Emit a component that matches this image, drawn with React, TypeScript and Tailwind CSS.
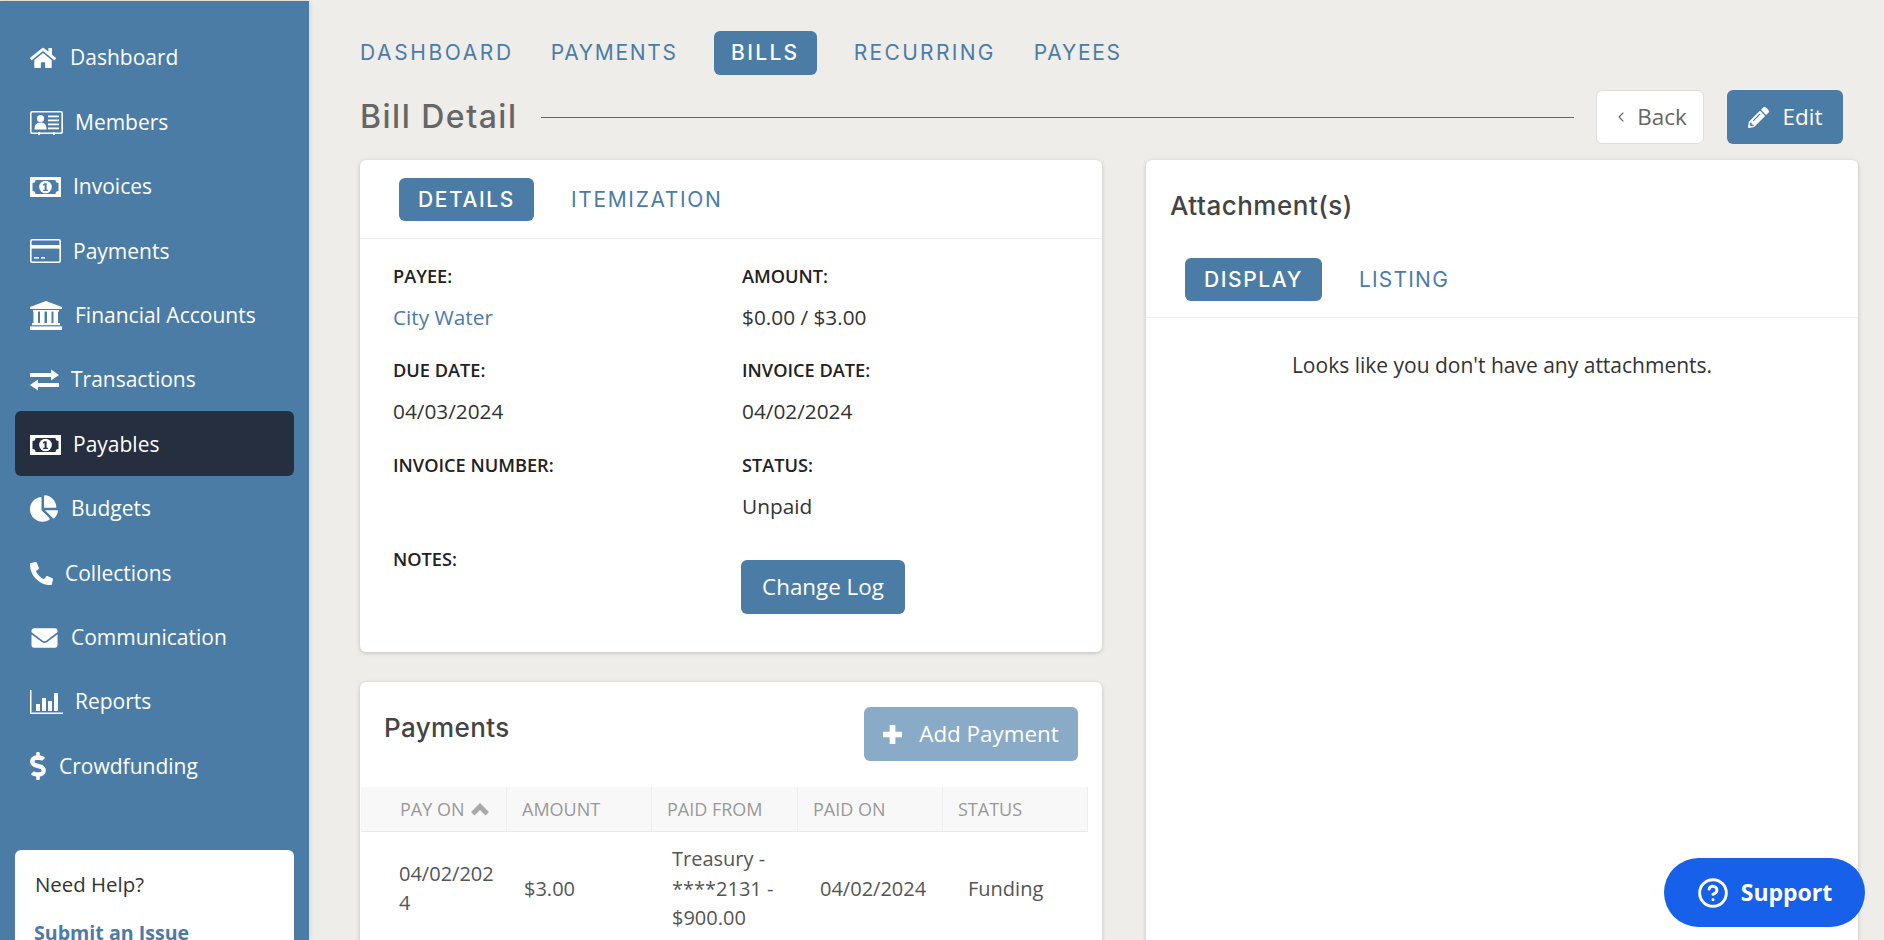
import { FaHome, FaChartPie, FaPhoneAlt, FaEnvelope, FaDollarSign, FaPencilAlt } from "react-icons/fa";
import { ChevronLeft, CircleHelp } from "lucide-react";

const MoneyIcon = ({ dark = false }: { dark?: boolean }) => {
  const cut = dark ? "#262f40" : "#4b7ca6";
  return (
    <svg viewBox="0 0 31 20" className="w-[31px] h-[20px] shrink-0">
      <rect width="31" height="20" fill="#fff" />
      <path d="M5.5 3H25.5C25.5 5 26.5 6 28.5 6V14C26.5 14 25.5 15 25.5 17H5.5C5.5 15 4.5 14 2.5 14V6C4.5 6 5.5 5 5.5 3Z" fill={cut} />
      <circle cx="15.5" cy="10" r="6.3" fill="#fff" />
      <path d="M14.2 6.2H16.6V12.8H17.9V14H13.2V12.8H14.6V8L13.4 8.7L12.9 7.7Z" fill={cut} />
    </svg>
  );
};

const MembersIcon = () => (
  <svg viewBox="0 0 33 24" className="w-[33px] h-[24px] shrink-0" fill="#fff">
    <rect x="0.8" y="0.8" width="31.4" height="21.4" rx="1.5" fill="none" stroke="#fff" strokeWidth="1.6" />
    <circle cx="10.5" cy="7.5" r="3.6" />
    <path d="M4.5 18.5C4.5 13.5 6.5 11.5 10.5 11.5C14.5 11.5 16.5 13.5 16.5 18.5Z" />
    <rect x="18" y="4.5" width="11" height="1.8" />
    <rect x="18" y="8.5" width="11" height="1.8" />
    <rect x="18" y="12.5" width="11" height="1.8" />
    <rect x="18" y="16.5" width="11" height="1.8" />
    <rect x="8" y="21" width="2" height="3" />
    <rect x="23" y="21" width="2" height="3" />
  </svg>
);

const CardIcon = () => (
  <svg viewBox="0 0 31 24" className="w-[31px] h-[24px] shrink-0" fill="#fff">
    <rect x="0.8" y="0.8" width="29.4" height="22.4" rx="1.5" fill="none" stroke="#fff" strokeWidth="1.6" />
    <rect x="1" y="6" width="29" height="3.6" />
    <rect x="4" y="18" width="5" height="1.6" />
    <rect x="11" y="18" width="4" height="1.6" />
  </svg>
);

const BankIcon = () => (
  <svg viewBox="0 0 32 29" className="w-[32px] h-[29px] shrink-0" fill="#fff">
    <path d="M16 0L32 6V8H0V6Z" />
    <rect x="3" y="9" width="26" height="1.6" />
    <rect x="3.5" y="10" width="4.5" height="12" />
    <rect x="10" y="10" width="4.5" height="12" />
    <rect x="17" y="10" width="4.5" height="12" />
    <rect x="23.5" y="10" width="4.5" height="12" />
    <rect x="2" y="22" width="28" height="2.2" />
    <rect x="0" y="25.4" width="32" height="3.6" />
  </svg>
);

const ExchangeIcon = () => (
  <svg viewBox="0 0 29 22" className="w-[29px] h-[22px] shrink-0" fill="#fff">
    <path d="M0 4H21V0.5L29 6L21 11.5V8H0Z" />
    <path d="M29 14H8V10.5L0 16L8 21.5V18H29Z" />
  </svg>
);

const ChartIcon = () => (
  <svg viewBox="0 0 33 24" className="w-[33px] h-[24px] shrink-0" fill="#fff">
    <path d="M0 0H1.5V22.5H33V24H0Z" />
    <rect x="6" y="14" width="4" height="7" />
    <rect x="12" y="8" width="4" height="13" />
    <rect x="18" y="11" width="4" height="10" />
    <rect x="24" y="3" width="4" height="18" />
  </svg>
);

const navItems = [
  { label: "Dashboard", icon: <FaHome className="w-[26px] h-[26px] shrink-0" />, gap: "gap-[14px]" },
  { label: "Members", icon: <MembersIcon />, gap: "gap-[12px]" },
  { label: "Invoices", icon: <MoneyIcon />, gap: "gap-[12px]" },
  { label: "Payments", icon: <CardIcon />, gap: "gap-[12px]" },
  { label: "Financial Accounts", icon: <BankIcon />, gap: "gap-[13px]" },
  { label: "Transactions", icon: <ExchangeIcon />, gap: "gap-[12px]" },
  { label: "Payables", icon: <MoneyIcon dark />, gap: "gap-[12px]", active: true },
  { label: "Budgets", icon: <FaChartPie className="w-[28px] h-[27px] shrink-0" />, gap: "gap-[13px]" },
  { label: "Collections", icon: <FaPhoneAlt className="w-[23px] h-[23px] shrink-0" />, gap: "gap-[12px]" },
  { label: "Communication", icon: <FaEnvelope className="w-[29px] h-[26px] shrink-0" />, gap: "gap-[12px]" },
  { label: "Reports", icon: <ChartIcon />, gap: "gap-[12px]" },
  { label: "Crowdfunding", icon: <FaDollarSign className="w-[16px] h-[28px] shrink-0" />, gap: "gap-[13px]" },
];

const Sidebar = () => (
  <aside className="w-[309px] shrink-0 h-[940px] mt-px bg-[#4b7ca6] pt-[24px] shadow-[0_0_6px_rgba(0,0,0,0.15)] text-white">
    <nav>
      {navItems.map((item) => (
        <div
          key={item.label}
          className={`mx-[15px] h-[64.4px] px-[15px] pt-[2px] flex items-center rounded-md text-[21px] ${item.gap} ${item.active ? "bg-[#262f40]" : ""}`}
        >
          {item.icon}
          <span>{item.label}</span>
        </div>
      ))}
    </nav>
    <div className="mx-[15px] pt-[52px]">
      <div className="bg-white rounded-md px-[20px] pt-[17px] h-[200px]">
        <p className="text-[#333] text-[20.4px] leading-[34px]">Need Help?</p>
        <p className="text-[#4b7ca6] text-[19.6px] font-bold leading-[34px] mt-[15px] -ml-px">Submit an Issue</p>
      </div>
    </div>
  </aside>
);

const tabFont = "font-['Inter',sans-serif] uppercase text-[21px]";

const TopTabs = () => (
  <div className="flex items-center h-[44px]">
    <span className={`${tabFont} tracking-[2.6px] text-[#4b7ca6] mr-[37px]`}>Dashboard</span>
    <span className={`${tabFont} tracking-[1.7px] text-[#4b7ca6] mr-[36px]`}>Payments</span>
    <span className={`${tabFont} tracking-[2.3px] font-medium text-white bg-[#4b7ca6] rounded-md h-[44px] w-[103px] flex items-center justify-center mr-[37px]`}>Bills</span>
    <span className={`${tabFont} tracking-[2.3px] text-[#4b7ca6] mr-[38px]`}>Recurring</span>
    <span className={`${tabFont} tracking-[1.7px] text-[#4b7ca6]`}>Payees</span>
  </div>
);

const Field = ({ label, value, link }: { label: string; value?: string; link?: boolean }) => (
  <div className="h-[94px]">
    <div className="text-[18.2px] font-semibold leading-[30px] text-[#222] uppercase">{label}</div>
    {value && <div className={`mt-[11px] leading-[30px] text-[20.8px] ${link ? "text-[#4b7ca6]" : "text-[#333]"}`}>{value}</div>}
  </div>
);

const DetailsCard = () => (
  <section className="bg-white rounded-md h-[492px] shadow-[0_1px_4px_rgba(0,0,0,0.2)]">
    <div className="h-[79px] border-b border-[#eeeeee] pt-[18px]">
      <div className="flex items-center pl-[39px]">
        <span className={`${tabFont} tracking-[1.6px] font-medium text-white bg-[#4b7ca6] rounded-md h-[43px] px-[19px] flex items-center`}>Details</span>
        <span className={`${tabFont} tracking-[1.65px] text-[#4b7ca6] ml-[37px]`}>Itemization</span>
      </div>
    </div>
    <div className="grid grid-cols-[349px_1fr] pl-[33px] pt-[22px]">
      <Field label="Payee:" value="City Water" link />
      <Field label="Amount:" value="$0.00 / $3.00" />
      <Field label="Due Date:" value="04/03/2024" />
      <Field label="Invoice Date:" value="04/02/2024" />
      <div className="pt-px"><Field label="Invoice Number:" /></div>
      <div className="pt-px"><Field label="Status:" value="Unpaid" /></div>
      <Field label="Notes:" />
      <div className="pt-[16px]">
        <button className="h-[54px] w-[164px] bg-[#4b7ca6] text-white rounded-md text-[22.4px] -ml-px">Change Log</button>
      </div>
    </div>
  </section>
);

const headers = ["Amount", "Paid From", "Paid On", "Status"];

const PaymentsCard = () => (
  <section className="bg-white rounded-md mt-[30px] h-[400px] shadow-[0_1px_4px_rgba(0,0,0,0.2)]">
    <div className="flex justify-between h-[105px] pl-[24px] pr-[24px] pt-[25px]">
      <h2 className="font-['Inter',sans-serif] font-medium text-[26px] tracking-[0.4px] text-[#444] leading-[42px]">Payments</h2>
      <button className="h-[54px] w-[214px] bg-[#8aabc7] text-white rounded-md text-[22.4px] flex items-center justify-center gap-[17px]">
        <svg viewBox="0 0 20 20" className="w-[19px] h-[19px]" fill="#fff"><path d="M7 0H13V7H20V13H13V20H7V13H0V7H7Z" /></svg>
        Add Payment
      </button>
    </div>
    <div className="ml-px w-[727px] grid grid-cols-[146px_145px_146px_145px_145px] h-[45px] bg-[#f8f8f8] border-b border-[#e8e8e8] text-[18px] text-[#999] uppercase leading-[44px]">
      <div className="pl-[39px] border-r border-[#eeeeee] flex items-center gap-[6px]">
        Pay On
        <svg viewBox="0 0 18 13" className="w-[18px] h-[13px]" fill="#aaa"><path d="M9 0L18 9L14.5 12.5L9 7L3.5 12.5L0 9Z" /></svg>
      </div>
      {headers.map((h) => (
        <div key={h} className="pl-[15px] border-r border-[#eeeeee]">{h}</div>
      ))}
    </div>
    <div className="ml-px w-[727px] grid grid-cols-[146px_145px_146px_145px_145px] items-center text-[20px] text-[#555] leading-[29.5px] pt-[12px]">
      <div className="pl-[38px] pr-[10px] break-all">04/02/2024</div>
      <div className="pl-[17px]">$3.00</div>
      <div className="pl-[20px] pr-[20px]">Treasury - ****2131 - $900.00</div>
      <div className="pl-[22px]">04/02/2024</div>
      <div className="pl-[25px]">Funding</div>
    </div>
  </section>
);

const AttachmentsCard = () => (
  <section className="bg-white rounded-md h-[900px] shadow-[0_1px_4px_rgba(0,0,0,0.2)]">
    <h2 className="font-['Inter',sans-serif] font-medium text-[26px] tracking-[0.5px] text-[#444] leading-[42px] pl-[24px] pt-[25px] h-[98px]">Attachment(s)</h2>
    <div className="h-[60px] border-b border-[#eeeeee]">
      <div className="flex items-center pl-[39px]">
        <span className={`${tabFont} tracking-[1.6px] font-medium text-white bg-[#4b7ca6] rounded-md h-[43px] px-[19px] flex items-center`}>Display</span>
        <span className={`${tabFont} tracking-[1.2px] text-[#4b7ca6] ml-[37px]`}>Listing</span>
      </div>
    </div>
    <p className="text-center text-[21px] text-[#333] leading-[30px] mt-[32px]">Looks like you don't have any attachments.</p>
  </section>
);

export default function App() {
  return (
    <div className="relative w-[1884px] h-[940px] overflow-hidden flex bg-[#eeedea] font-['Open_Sans',sans-serif]">
      <Sidebar />
      <main className="flex-1 pl-[51px] pr-[26px] pt-[31px]">
        <TopTabs />
        <div className="flex items-center h-[54px] mt-[15px]">
          <h1 className="font-['Inter',sans-serif] font-medium text-[32px] tracking-[1.5px] text-[#666]">Bill Detail</h1>
          <div className="flex-1 h-px bg-[#666] ml-[24px] mr-[22px]" />
          <button className="h-[54px] w-[108px] bg-white border border-[#ddd] rounded-md text-[22.4px] text-[#666] flex items-center justify-center gap-[8px]">
            <ChevronLeft className="w-[16px] h-[22px]" strokeWidth={1.6} />
            Back
          </button>
          <button className="h-[54px] w-[116px] ml-[23px] mr-[15px] bg-[#4b7ca6] text-white rounded-md text-[22.4px] flex items-center justify-center gap-[14px]">
            <FaPencilAlt className="w-[21px] h-[21px]" />
            Edit
          </button>
        </div>
        <div className="grid grid-cols-[742px_712px] gap-x-[44px] mt-[16px]">
          <div>
            <DetailsCard />
            <PaymentsCard />
          </div>
          <AttachmentsCard />
        </div>
      </main>
      <button className="absolute left-[1664px] top-[858px] w-[201px] h-[69px] rounded-full bg-[#1760ea] text-white font-bold text-[23px] flex items-center justify-center gap-[12px]">
        <CircleHelp className="w-[32px] h-[32px]" strokeWidth={2.2} />
        Support
      </button>
    </div>
  );
}
